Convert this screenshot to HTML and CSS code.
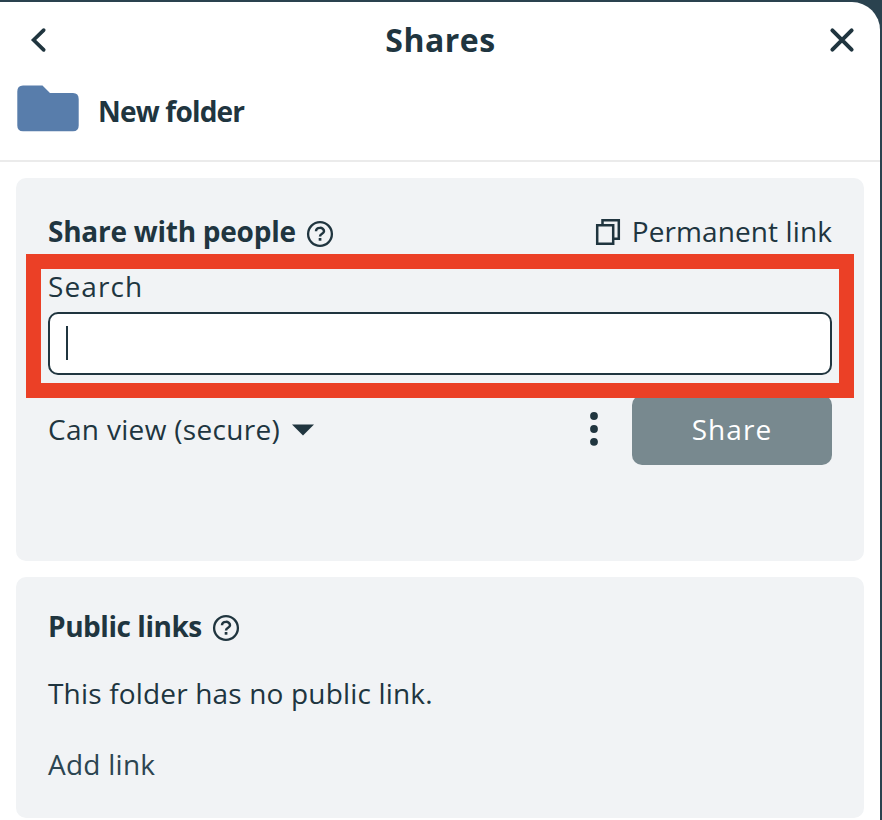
FILE: index.html
```html
<!DOCTYPE html>
<html lang="en">
<head>
<meta charset="utf-8">
<title>Shares</title>
<link rel="stylesheet" href="styles.css">
</head>
<body>
<main class="panel">
  <header class="panel-header">
    <button class="icon-button" aria-label="Back">
      <svg width="20" height="28" viewBox="0 0 20 28"><path d="M15.7 4.1 L5.6 14 L15.7 23.9" fill="none" stroke="currentColor" stroke-width="3.7" stroke-linecap="round"/></svg>
    </button>
    <h1 class="title"><span class="t-title">Shares</span></h1>
    <button class="icon-button" aria-label="Close">
      <svg width="28" height="28" viewBox="0 0 28 28"><path d="M4.4 4.4 L23.6 23.6 M23.6 4.4 L4.4 23.6" fill="none" stroke="currentColor" stroke-width="4" stroke-linecap="round"/></svg>
    </button>
  </header>
  <div class="resource">
    <svg width="62" height="47" viewBox="0 0 62 47"><path d="M6 0.5 H25.5 L33 8 H56 Q61.7 8 61.7 14 V40.5 Q61.7 46.3 56 46.3 H6 Q0.3 46.3 0.3 40.5 V6.5 Q0.3 0.5 6 0.5 Z" fill="#587dab"/></svg>
    <h2 class="heading t-folder">New folder</h2>
  </div>
  <section class="card people">
    <div class="row top-row">
      <h3 class="heading t-people">Share with people</h3>
      <svg class="help" width="28" height="28" viewBox="0 0 28 28"><circle cx="14" cy="14" r="11.9" fill="none" stroke="currentColor" stroke-width="2.3"/><path d="M10 11.3 C10 6.8 18 6.7 18 11.2 C18 13.8 14 13.6 14 16.4" fill="none" stroke="currentColor" stroke-width="2.5"/><rect x="12.7" y="18" width="2.7" height="2.7" fill="currentColor"/></svg>
      <a class="permalink">
        <svg width="26" height="28" viewBox="0 0 26 28"><path d="M2.2 7.2 H18.2 V25.8 H2.2 Z M7.5 6.5 V2.2 H23.8 V20.8 H19" fill="none" stroke="currentColor" stroke-width="2.5"/></svg>
        <span class="t-perm">Permanent link</span>
      </a>
    </div>
    <label class="label t-search">Search</label>
    <div class="field"><span class="caret"></span></div>
    <div class="row actions">
      <span class="t-role">Can view (secure)</span>
      <svg class="arrow" width="24" height="12" viewBox="0 0 24 12"><path d="M1 0.5 H23 L12 11.5 Z" fill="currentColor"/></svg>
      <svg class="dots" width="10" height="36" viewBox="0 0 10 36"><circle cx="5" cy="5" r="3.9" fill="currentColor"/><circle cx="5" cy="18" r="3.9" fill="currentColor"/><circle cx="5" cy="30.8" r="3.9" fill="currentColor"/></svg>
      <button class="share"><span class="t-share">Share</span></button>
    </div>
    <div class="highlight"></div>
  </section>
  <section class="card links">
    <div class="row links-row">
      <h3 class="heading t-links">Public links</h3>
      <svg class="help" width="28" height="28" viewBox="0 0 28 28"><circle cx="14" cy="14" r="11.9" fill="none" stroke="currentColor" stroke-width="2.3"/><path d="M10 11.3 C10 6.8 18 6.7 18 11.2 C18 13.8 14 13.6 14 16.4" fill="none" stroke="currentColor" stroke-width="2.5"/><rect x="12.7" y="18" width="2.7" height="2.7" fill="currentColor"/></svg>
    </div>
    <p class="empty t-empty">This folder has no public link.</p>
    <a class="add t-add">Add link</a>
  </section>
</main>
</body>
</html>
```
FILE: styles.css
```css
* { box-sizing: border-box; }
body {
  margin: 0;
  padding-top: 2px;
  height: 820px;
  overflow: hidden;
  background: #2a424f;
  color: #20353f;
  font: 28px/40px "Open Sans", "Noto Sans", sans-serif;
}
h1, h2, h3, p { margin: 0; font-size: inherit; font-weight: 700; }
p { font-weight: 400; }
svg { display: block; flex: none; }
button { border: 0; padding: 0; background: none; color: inherit; font: inherit; }
.panel { width: 880px; height: 818px; background: #fff; border-top-right-radius: 28px; }
.panel-header {
  display: grid;
  grid-template-columns: 28px 1fr 28px;
  align-items: center;
  height: 76px;
  padding: 0 24px 0 28px;
}
.title { padding-right: 3px; text-align: center; font-size: 32px; letter-spacing: 0.5px; }
.resource {
  display: flex;
  align-items: center;
  gap: 19px;
  height: 84px;
  padding: 0 18px 21px 17px;
  border-bottom: 2px solid #ebebeb;
}
.card { position: relative; margin: 16px 16px 0; padding: 0 32px; border-radius: 10px; background: #f1f3f5; }
.people { height: 383px; padding-top: 34px; }
.links { height: 241px; padding-top: 29px; }
.row { display: flex; align-items: center; height: 40px; }
.help { margin: 4px 0 0 10px; }
.permalink { display: flex; align-items: center; gap: 11px; margin-left: auto; }
.label { display: block; height: 40px; margin-top: 14px; line-height: 40px; }
.field { display: flex; align-items: center; height: 63px; margin-top: 6px; padding-left: 16px; border: 2px solid #20353f; border-radius: 10px; background: #fff; }
.caret { width: 2px; height: 34px; margin-bottom: 2px; background: #20353f; }
.actions { height: 70px; margin-top: 20px; }
.arrow { margin-left: 11px; }
.dots { margin-left: auto; margin-bottom: 2px; }
.share { width: 200px; height: 70px; margin-left: 33px; border-radius: 10px; background: #78898f; color: #fff; }
.highlight { position: absolute; left: 10px; top: 76px; width: 828px; height: 144px; border: 15px solid #eb4026; }
.empty { margin-top: 27px; }
.add { display: block; margin-top: 31px; color: #2c4551; }
.t-folder { padding-top: 5px; letter-spacing: -0.8px; }
.t-people { padding-bottom: 2px; letter-spacing: -0.25px; }
.t-perm { padding-bottom: 2px; letter-spacing: 0.1px; }
.t-search { letter-spacing: 1.1px; }
.t-role { padding-bottom: 3px; letter-spacing: 0.32px; }
.t-share { display: block; padding-bottom: 3px; letter-spacing: 1.1px; }
.t-links { padding-bottom: 1px; letter-spacing: -0.45px; }
.t-empty { letter-spacing: 0.17px; }
.t-add { letter-spacing: 0.25px; }
```
